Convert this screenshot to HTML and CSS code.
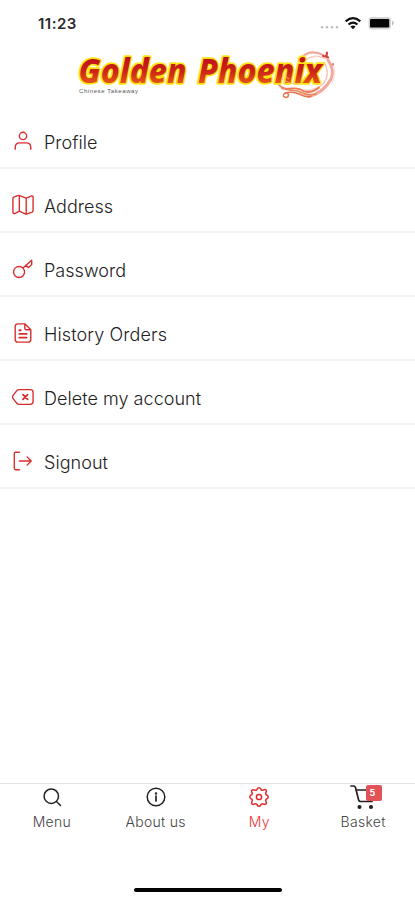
FILE: index.html
```html
<!DOCTYPE html>
<html lang="en">
<head>
<meta charset="utf-8">
<meta name="viewport" content="width=device-width, initial-scale=1">
<title>Golden Phoenix</title>
<link rel="stylesheet" href="styles.css">
</head>
<body>
<div class="app">
  <div class="status">
    <span class="time">11:23</span>
    <svg class="signals" width="76" height="16" viewBox="319 15 76 16">
      <g fill="#bbb"><circle cx="322" cy="27.3" r="1.2"/><circle cx="327" cy="27.3" r="1.2"/><circle cx="332" cy="27.3" r="1.2"/><circle cx="337" cy="27.3" r="1.2"/></g>
      <g fill="none" stroke="#111" stroke-width="2.2"><path d="M345.700 21.300q7.300-6.200 14.600 0"/><path d="M348.500 24.500q4.500-3.800 9 0"/></g>
      <path d="M350.400 26.600q2.600-2 5.200 0L353 29.200z" fill="#111"/>
      <rect x="368.500" y="17" width="22.500" height="12.400" rx="3.200" fill="#d4d4d4"/>
      <rect x="370" y="19" width="19.200" height="8.600" rx="1.200" fill="#050505"/>
      <path d="M392 20.500q3.400 2.600 0 5.200z" fill="#bbb"/>
    </svg>
  </div>
  <header class="brand">
    <svg width="275" height="60" viewBox="70 45 275 60">
      <defs><linearGradient id="fire" x1="0" y1="57" x2="0" y2="84" gradientUnits="userSpaceOnUse"><stop offset="0" stop-color="#bd101b"/><stop offset=".55" stop-color="#cc2518"/><stop offset="1" stop-color="#e65a17"/></linearGradient></defs>
      <g fill="none" stroke-linecap="round">
        <path d="M302 57q9-8 21-2" stroke="#f3a79b" stroke-width="2.200"/>
        <path d="M305 60q11-7 21-1" stroke="#f8cfc8" stroke-width="1.500"/>
        <path d="M323 56l3.500.5.500-4m-1 4l2 1" stroke="#d8413b" stroke-width="2.200"/>
        <path d="M333 64v1" stroke="#e06a62" stroke-width="1.800"/>
        <path d="M328 60q7 10 3 19-7 14-23 17.500" stroke="#f3a89b" stroke-width="3"/>
        <path d="M333.500 66q3 10-2 18" stroke="#fbe2dd" stroke-width="1.300"/>
        <path d="M324 62q7 12-1 22-10 9-24 5" stroke="#f7c3ba" stroke-width="1.300"/>
        <path d="M279 85q4 4.500 12 3.500t13 3q8 2 15-4" stroke="#eb7c52" stroke-width="1.800"/>
        <path d="M282 88.500q9 2 16 2.500 8 5 18 3" stroke="#ec8763" stroke-width="1.600"/>
        <path d="M285 93q8-2 14 1 7 3.500 12 2.500M286 97.500q-4-1-2-3.500 3-2 4.500.5 0 3-2.500 3" stroke="#e87550" stroke-width="1.500"/>
      </g>
      <g class="wordmark">
        <text x="78.500" y="83.300" textLength="108" lengthAdjust="spacingAndGlyphs">Golden</text>
        <text x="198" y="83.300" textLength="124" lengthAdjust="spacingAndGlyphs">Phoenix</text>
      </g>
      <path d="M285 74q-5 4 0 7 7 4 14 3m-13-7l3 2" fill="none" stroke="#f7c58a" stroke-width=".8"/>
      <text class="tagline" x="79" y="93.300" textLength="59">Chinese Takeaway</text>
    </svg>
  </header>
  <nav class="list">
    <a class="row"><svg class="icon" viewBox="0 0 24 24"><circle cx="12" cy="6.500" r="4"/><path d="M3.500 21v-2q0-5 5-5h7q5 0 5 5v2"/></svg><span>Profile</span></a>
    <a class="row"><svg class="icon" viewBox="0 0 24 24"><path d="M1 5.200q0-1.200 1-1.700l4-1.700q1.300-.5 2.400 0L15.500 4.500l5.500-2.300q2-.5 2 1.300v14.500q0 1.300-1 1.700l-5.500 2q-1 .4-2 0L8 18.800l-5 2.500q-2 .5-2-1.300zM8 2v16.500M15.500 4.500v17"/></svg><span>Address</span></a>
    <a class="row"><svg class="icon" viewBox="0 0 24 24"><circle cx="7.700" cy="15.300" r="6"/><path d="M12 11L21.500 2.500V7L18 10.500 15 8"/></svg><span>Password</span></a>
    <a class="row history"><svg class="icon" viewBox="0 0 24 24"><path d="M6 2h8l6.500 6.500V19q0 3-3 3h-11q-3 0-3-3V5q0-3 3-3zM14 2v4.500q0 2 2 2h4.500"/><path d="M8 9h1.500M8 13h8M8 17h8" stroke-width="2"/></svg><span>History Orders</span></a>
    <a class="row"><svg class="icon" viewBox="0 0 24 24"><path d="M7.500 4H20q3 0 3 3v10q0 3-3 3H7.500q-1.200 0-2-.8L1 13.500q-1-1.500 0-3L5.500 4.800q.8-.8 2-.8z"/><path d="M12 9.500l5 5m0-5l-5 5" stroke-width="2"/></svg><span>Delete my account</span></a>
    <a class="row"><svg class="icon" viewBox="0 0 24 24"><path d="M8 2.500H4q-1.500 0-1.500 1.500v16q0 1.500 1.500 1.500h4M8 12h13M16.500 7.500L21 12l-4.500 4.500"/></svg><span>Signout</span></a>
  </nav>
  <footer class="tabs">
    <a class="tab"><svg viewBox="0 0 20 20"><circle cx="9.300" cy="9.200" r="7.200"/><path d="M14.500 14.500l4 4"/></svg><span>Menu</span></a>
    <a class="tab"><svg viewBox="0 0 20 20"><circle cx="10" cy="10" r="8.800"/><path d="M10 9v5" stroke-width="1.700"/><circle cx="10" cy="6.500" r=".5"/></svg><span>About us</span></a>
    <a class="tab active"><svg viewBox="0 0 20 20"><path d="M7.800 2.800Q8.300.8 10 .8t2.200 2q1 .8 2 .3 1.800-1 2.700 0t0 2.700q-.5 1.100.3 2 2 .5 2 2.200t-2 2.200q-.8 1-.3 2 1 1.800 0 2.700t-2.700 0q-1-.5-2 .3-.5 2-2.200 2t-2.200-2q-1-.8-2-.3-1.800 1-2.700 0t0-2.700q.5-1-.3-2-2-.5-2-2.200t2-2.200q.8-1 .3-2-1-1.800 0-2.700t2.700 0q1 .5 2-.3z"/><circle cx="10" cy="10" r="2.600"/></svg><span>My</span></a>
    <a class="tab"><span class="cart"><svg viewBox="0 0 26 26"><path d="M1 2h2.500q1.500 0 2 1.500L8.500 15.500q.4 2 2 2H22M6 6h18l-2 8q-.2 1.200-1.500 1.400"/><circle cx="9.500" cy="23" r="1.200" fill="#111"/><circle cx="21" cy="23" r="1.200" fill="#111"/></svg><b class="badge">5</b></span><span>Basket</span></a>
  </footer>
  <div class="home"></div>
</div>
</body>
</html>
```
FILE: styles.css
```css
* { box-sizing: border-box; }
body { margin: 0; background: #fff; font-family: Inter, "Liberation Sans", sans-serif; color: #222; }
.app { width: 415px; height: 900px; display: flex; flex-direction: column; overflow: hidden; }
.status { height: 45px; padding: 15px 20px 0 38px; display: flex; justify-content: space-between; align-items: flex-start; }
.time { font-size: 15px; line-height: 17px; font-weight: 600; letter-spacing: .5px; color: #292929; }
.signals { display: block; }
.brand { height: 60px; padding-left: 70px; }
.brand svg { display: block; }
.wordmark { font: italic 800 33.5px "Noto Sans", "Open Sans", sans-serif; fill: url(#fire); stroke: #ffe313; stroke-width: 3.4px; stroke-linejoin: round; paint-order: stroke; }
.tagline { font: 6px "Liberation Sans", sans-serif; fill: #555; }
.list { display: flex; flex-direction: column; }
.row { height: 64px; padding: 12px 12px 0; display: flex; align-items: center; gap: 10px; border-bottom: 2px solid #f3f3f3; font-size: 18px; font-weight: 300; letter-spacing: .04px; }
.history { letter-spacing: .12px; }
.icon { width: 22px; height: 22px; margin-top: -3px; fill: none; stroke: #d82d2d; stroke-width: 1.5; stroke-linejoin: round; stroke-linecap: round; }
.tabs { margin-top: auto; height: 93px; border-top: 1px solid #e4e4e4; display: grid; grid-template-columns: repeat(4, 1fr); }
.tab { display: flex; flex-direction: column; align-items: center; padding-top: 3px; gap: 6px; font-size: 14px; line-height: 18px; font-weight: 300; letter-spacing: .3px; color: #444; }
.tab svg { width: 20px; height: 20px; fill: none; stroke: #222; stroke-width: 1.5; stroke-linejoin: round; stroke-linecap: round; }
.active { color: #ed3535; }
.tab.active svg { stroke: #e02b2b; }
.cart { position: relative; width: 26px; height: 20px; }
.cart svg { position: absolute; left: 0; top: -3px; width: 26px; height: 26px; stroke-width: 1.7; }
.badge { position: absolute; left: 16px; top: -2px; width: 16px; height: 16px; border-radius: 2px; background: #e25256; color: #fff; font-size: 9px; font-weight: 700; line-height: 16px; text-align: center; padding-right: 3px; }
.home { height: 24px; padding-top: 12px; }
.home::before { content: ""; display: block; width: 148px; height: 4px; margin: 0 auto; border-radius: 2px; background: #030303; }
```
